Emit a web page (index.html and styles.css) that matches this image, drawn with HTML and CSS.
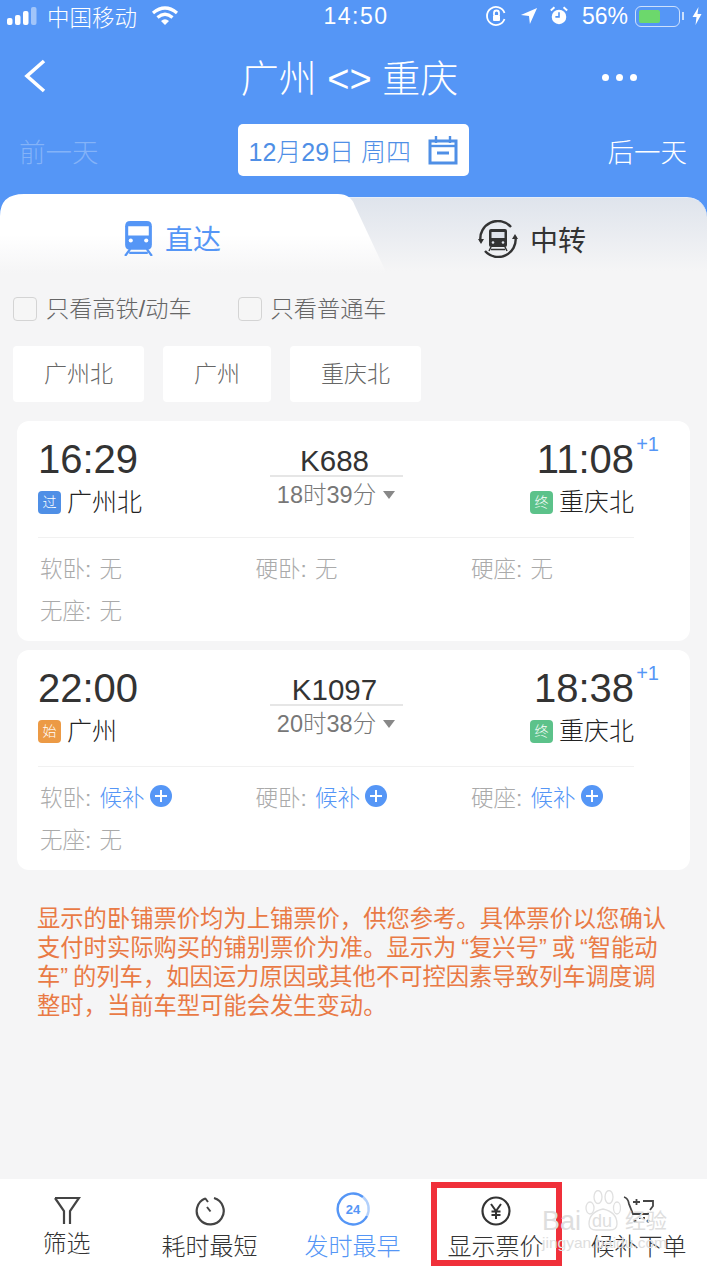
FILE: index.html
```html
<!DOCTYPE html>
<html lang="zh-CN">
<head>
  <meta charset="UTF-8">
  <meta name="viewport" content="width=device-width, initial-scale=1.0">
  <title>广州 &lt;&gt; 重庆</title>
  <link rel="stylesheet" href="styles.css">
</head>
<body>
  <div class="page">
    <div class="top">
      <div class="status">
        <div class="status-left">
          <svg class="signal" width="31" height="20" viewBox="0 0 31 20"><rect x="0" y="12" width="5.500" height="7" rx="2" fill="#fff"/><rect x="8" y="9" width="5.500" height="10" rx="2" fill="#fff"/><rect x="16" y="5" width="5.500" height="14" rx="2" fill="#fff"/><rect x="24" y="1" width="5.500" height="18" rx="2" fill="#fff" opacity=".45"/></svg>
          <span>中国移动</span>
          <svg class="wifi" width="28" height="22" viewBox="0 0 28 22" fill="none" stroke="#fff" stroke-width="3.200"><path d="M2 8 Q14 -2 26 8"/><path d="M6.500 12.500 Q14 6 21.500 12.500"/><path d="M14 20 L10 16 Q14 12.500 18 16 Z" fill="#fff" stroke="none"/></svg>
        </div>
        <div class="clock">14:50</div>
        <div class="status-right">
          <svg class="st-lock" width="23" height="22" viewBox="0 0 22 22" fill="none" stroke="#fff" stroke-width="1.800"><path d="M19 14 A9 9 0 1 1 19 8"/><rect x="7.500" y="10" width="7" height="6" rx="1" fill="#fff" stroke="none"/><path d="M8.500 10 V8 a2.500 2.500 0 0 1 5 0 V10"/></svg>
          <svg class="st-arrow" width="18" height="18" viewBox="0 0 20 20"><path d="M19 1 L1 9 L10 10 L11 19 Z" fill="#fff"/></svg>
          <svg class="st-alarm" width="20" height="20" viewBox="0 0 22 22"><circle cx="11" cy="12" r="8" fill="#fff"/><path d="M11 7 V12 H7" fill="none" stroke="#5596f6" stroke-width="1.800"/><path d="M2 5 L6 1.500 M20 5 L16 1.500" stroke="#fff" stroke-width="2.200"/></svg>
          <span class="percent">56%</span>
          <span class="battery"><span class="battery-fill"></span></span>
          <svg class="st-bolt" width="12" height="20" viewBox="0 0 11 20"><path d="M7 1 L1 11 H5 L4 19 L10 8 H6 Z" fill="#fff"/></svg>
        </div>
      </div>

      <div class="header">
        <svg class="back" width="24" height="34" viewBox="0 0 24 34" fill="none" stroke="#fff" stroke-width="3.600"><path d="M21 2 L4 17 L21 32"/></svg>
        <div class="title">广州 &lt;&gt; 重庆</div>
        <div class="dots"><i></i><i></i><i></i></div>
      </div>

      <div class="date-row">
        <span class="prev">前一天</span>
        <div class="date-box">
          <span>12月29日 周四</span>
          <svg width="30" height="30" viewBox="0 0 30 30" fill="none" stroke="#4f8fe6" stroke-width="3"><path d="M2 6 H28 V28 H2 Z"/><path d="M8 1 V8 M22 1 V8" stroke-width="2.400"/><path d="M2 11 H28" stroke-width="2.400"/><path d="M9 18 H21"/></svg>
        </div>
        <span class="next">后一天</span>
      </div>
    </div>

    <div class="tabs">
      <div class="tab tab-active">
        <svg width="29" height="35" viewBox="0 0 28 34"><path d="M6 0 H22 Q27 0 27 5 V23 Q27 28 22 28 H6 Q1 28 1 23 V5 Q1 0 6 0 Z" fill="#5596f6"/><path d="M4 5 H24 V14 H4 Z" fill="#fff"/><circle cx="6.500" cy="19" r="2" fill="#fff"/><circle cx="21.500" cy="19" r="2" fill="#fff"/><path d="M6 27 L1 34 M22 27 L27 34 M5 31 H23" stroke="#5596f6" stroke-width="2.200" fill="none"/></svg>
        <span>直达</span>
      </div>
      <div class="tab tab-other">
        <svg width="40" height="38" viewBox="0 0 40 38" fill="none"><path d="M2.500 21 A17.500 17.500 0 0 1 33 7 M37.500 17 A17.500 17.500 0 0 1 7 31" stroke="#333" stroke-width="2.400"/><path d="M0 19 H6 L3 24 Z M34 19 H40 L37 14 Z" fill="#333"/><path d="M13 9 H27 Q29 9 29 11 V25 Q29 27 27 27 H13 Q11 27 11 25 V11 Q11 9 13 9 Z" fill="#333"/><rect x="13.500" y="12" width="13" height="6" fill="#dfe3ea"/><circle cx="15" cy="22.500" r="1.300" fill="#dfe3ea"/><circle cx="25" cy="22.500" r="1.300" fill="#dfe3ea"/><path d="M13 27 L11 31 M27 27 L29 31 M13 29.500 H27" stroke="#333" stroke-width="1.500"/></svg>
        <span>中转</span>
      </div>
    </div>

    <div class="filters">
      <label class="check"><i class="box"></i>只看高铁/动车</label>
      <label class="check"><i class="box"></i>只看普通车</label>
    </div>

    <div class="chips">
      <span class="chip">广州北</span>
      <span class="chip chip-short">广州</span>
      <span class="chip">重庆北</span>
    </div>

    <div class="card">
      <div class="trip">
        <div class="end">
          <div class="time">16:29</div>
          <div class="station"><em class="tag tag-blue">过</em>广州北</div>
        </div>
        <div class="mid">
          <div class="train-no">K688</div>
          <div class="duration">18时39分<i class="caret"></i></div>
        </div>
        <div class="end end-right">
          <div class="time">11:08<sup class="plus">+1</sup></div>
          <div class="station"><em class="tag tag-green">终</em>重庆北</div>
        </div>
      </div>
      <div class="seats">
        <span>软卧: 无</span>
        <span>硬卧: 无</span>
        <span>硬座: 无</span>
        <span>无座: 无</span>
      </div>
    </div>

    <div class="card">
      <div class="trip">
        <div class="end">
          <div class="time">22:00</div>
          <div class="station"><em class="tag tag-orange">始</em>广州</div>
        </div>
        <div class="mid">
          <div class="train-no">K1097</div>
          <div class="duration">20时38分<i class="caret"></i></div>
        </div>
        <div class="end end-right">
          <div class="time">18:38<sup class="plus">+1</sup></div>
          <div class="station"><em class="tag tag-green">终</em>重庆北</div>
        </div>
      </div>
      <div class="seats">
        <span>软卧: <b>候补</b><i class="add"></i></span>
        <span>硬卧: <b>候补</b><i class="add"></i></span>
        <span>硬座: <b>候补</b><i class="add"></i></span>
        <span>无座: 无</span>
      </div>
    </div>

    <p class="notice">显示的卧铺票价均为上铺票价，供您参考。具体票价以您确认支付时实际购买的铺别票价为准。显示为 “复兴号” 或 “智能动车” 的列车，如因运力原因或其他不可控因素导致列车调度调整时，当前车型可能会发生变动。</p>

    <div class="tabbar">
      <div class="bar-item bar-first">
        <svg width="28" height="30" viewBox="0 0 28 30" fill="none" stroke="#444" stroke-width="2.200"><path d="M2 2 H26 L17 15 V28 M11 28 V15 L2 2"/></svg>
        <span>筛选</span>
      </div>
      <div class="bar-item">
        <svg width="32" height="30" viewBox="0 0 32 30" fill="none" stroke="#444" stroke-width="2.200"><path d="M11 2.500 A13.500 13.500 0 1 0 20 2"/><path d="M11 2 L14 6 M13 11 L16.500 15.500" stroke-width="2"/></svg>
        <span>耗时最短</span>
      </div>
      <div class="bar-item bar-on">
        <svg width="36" height="34" viewBox="0 0 36 34" fill="none" stroke="#5596f6" stroke-width="2.400"><path d="M28 5 A15.500 15.500 0 1 0 32 24"/><path d="M32 24 A15.500 15.500 0 0 0 28 5" opacity=".45"/><text x="18" y="22" text-anchor="middle" class="ring-text">24</text></svg>
        <span>发时最早</span>
      </div>
      <div class="bar-item bar-price">
        <svg width="32" height="30" viewBox="0 0 32 30" fill="none" stroke="#333" stroke-width="2.200"><circle cx="16" cy="15" r="13.500"/><path d="M11 8 L16 15 L21 8 M16 15 V23 M11.500 15.500 H20.500 M11.500 19 H20.500" stroke-width="2"/></svg>
        <span>显示票价</span>
        <i class="marker"></i>
      </div>
      <div class="bar-item">
        <svg width="32" height="30" viewBox="0 0 32 30" fill="none" stroke="#444" stroke-width="1.800"><path d="M1 1 Q5 2 6 8 L10 18 H26"/><path d="M10 6 H17 M13.500 3 V9 M20 5 H30 V10 L27 14"/><circle cx="12" cy="25" r="1.500" fill="#444" stroke="none"/><circle cx="25" cy="25" r="1.500" fill="#444" stroke="none"/><path d="M16 22 H22" stroke-dasharray="2 2"/></svg>
        <span>候补下单</span>
      </div>
    </div>

    <div class="watermark">
      <svg width="36" height="42" viewBox="0 0 36 42" fill="none" stroke="#e0e0e0" stroke-width="1.300"><ellipse cx="5" cy="18" rx="4" ry="6"/><ellipse cx="13" cy="7" rx="4" ry="6.500"/><ellipse cx="24" cy="7" rx="4" ry="6.500"/><ellipse cx="32" cy="18" rx="3.500" ry="6"/><path d="M4 34 Q4 22 18 19 Q32 22 32 34 Q32 40 25 40 H11 Q4 40 4 34 Z"/></svg>
      <div class="wm-logo"><span>Bai</span><span class="wm-du">du</span><span class="wm-cn">经验</span></div>
      <div class="wm-url">jingyan.baidu.com</div>
    </div>
  </div>
</body>
</html>
```

FILE: styles.css
```css
* {
  box-sizing: border-box;
}

html,
body {
  margin: 0;
  padding: 0;
}

body {
  font-family: "Liberation Sans", "Noto Sans CJK SC", sans-serif;
  background: #f5f5f6;
}

.page {
  position: relative;
  width: 707px;
  height: 1266px;
  overflow: hidden;
  display: flex;
  flex-direction: column;
  background: #f5f5f6;
}

.top {
  height: 194px;
  background: #5596f6;
  color: #fff;
}

/* status bar */
.status {
  height: 32px;
  padding: 0 4px 0 7px;
  display: grid;
  grid-template-columns: 1fr auto 1fr;
  align-items: center;
  font-size: 23px;
  font-weight: 300;
}

.status-left,
.status-right {
  display: flex;
  align-items: center;
}

.status-left span {
  margin: 0 14px 0 9px;
  font-size: 22.5px;
}

.status-right {
  justify-content: flex-end;
}

.st-arrow {
  margin-left: 12px;
}

.st-alarm {
  margin-left: 11px;
}

.percent {
  margin-left: 13px;
}

.clock {
  margin-left: 2px;
  letter-spacing: 1.5px;
}

.battery {
  position: relative;
  width: 45px;
  height: 21px;
  padding: 3px;
  margin-left: 7px;
  margin-right: 11px;
  border: 1.5px solid rgba(255, 255, 255, 0.7);
  border-radius: 6px;
}

/* battery nub */
.battery::after {
  content: "";
  position: absolute;
  right: -5px;
  top: 5px;
  width: 2px;
  height: 8px;
  background: rgba(255, 255, 255, 0.7);
}

.battery-fill {
  display: block;
  width: 56%;
  height: 100%;
  background: #6cd86c;
  border-radius: 2px;
}

/* header */
.header {
  height: 88px;
  padding: 0 70px 0 23px;
  display: flex;
  align-items: center;
  justify-content: space-between;
}

.title {
  font-size: 38px;
  line-height: 82px;
  font-weight: 300;
  margin-left: 50px;
  padding-top: 6px;
}

.dots {
  display: flex;
  gap: 7px;
  margin-top: 2px;
}

.dots i {
  width: 7px;
  height: 7px;
  border-radius: 50%;
  background: #fff;
}

.date-row {
  margin-top: 4px;
  height: 52px;
  padding: 0 20px 0 19px;
  display: flex;
  align-items: center;
  justify-content: space-between;
  font-size: 26.5px;
  font-weight: 300;
}

.prev {
  color: rgba(255, 255, 255, 0.28);
}

.date-box {
  width: 231px;
  height: 52px;
  padding: 0 11px;
  display: flex;
  align-items: center;
  justify-content: space-between;
  background: #fff;
  border-radius: 5px;
  color: #4f8fe6;
  font-size: 25px;
}

/* tabs */
.tabs {
  position: relative;
  height: 90px;
  display: flex;
  background: linear-gradient(#5596f6 30px, #f5f5f6 30px);
}

.tab {
  display: flex;
  align-items: center;
  justify-content: center;
  font-size: 28px;
  padding-bottom: 2px;
}

.tab-active {
  position: relative;
  z-index: 1;
  width: 385px;
  gap: 12px;
  padding-right: 40px;
  color: #5596f6;
  background: linear-gradient(#fff 45%, #f5f5f6 88%);
  clip-path: path("M0 90 L0 22 Q0 0 24 0 L338 0 Q351 0 355 12 L385 76 V90 Z");
}

.tab-other {
  flex: 1;
  margin-left: -40px;
  margin-top: 3px;
  padding-left: 12px;
  padding-bottom: 5px;
  gap: 12px;
  color: #333;
  background: linear-gradient(#dfe4ec, #f5f5f6 85%);
  border-top: 1.5px solid #e6edf8;
  border-top-right-radius: 20px;
}

/* filters */
.filters {
  margin-top: 13px;
  padding-left: 13px;
  display: flex;
  gap: 46px;
  font-size: 23.2px;
  font-weight: 300;
  color: #666;
}

.check {
  display: flex;
  align-items: center;
  gap: 9px;
  height: 24px;
  line-height: 24px;
}

.box {
  width: 24px;
  height: 24px;
  border: 1.5px solid #d4d4d4;
  border-radius: 4px;
  background: #f6f6f6;
}

.chips {
  margin-top: 25px;
  padding-left: 13px;
  display: flex;
  gap: 19px;
}

.chip {
  width: 131px;
  height: 56px;
  padding-bottom: 4px;
  display: flex;
  align-items: center;
  justify-content: center;
  background: #fff;
  border-radius: 4px;
  font-size: 23px;
  font-weight: 300;
  color: #666;
}

.chip-short {
  width: 108px;
}

/* train cards */
.card {
  width: 673px;
  height: 220px;
  margin: 19px 0 0 17px;
  padding: 14px 56px 0 21px;
  background: #fff;
  border-radius: 12px;
}

.card + .card {
  margin-top: 9px;
}

.trip {
  height: 103px;
  display: grid;
  grid-template-columns: 1fr 133px 1fr;
  border-bottom: 1px solid #f1f1f1;
}

.time {
  position: relative;
  font-size: 40px;
  line-height: 48px;
  color: #333;
}

.plus {
  position: absolute;
  right: -25px;
  top: -3px;
  font-size: 20px;
  line-height: 24px;
  font-weight: 300;
  color: #5596f6;
}

.station {
  margin-top: 1px;
  display: flex;
  align-items: center;
  gap: 6px;
  font-size: 25px;
  line-height: 36px;
  font-weight: 300;
  color: #222;
}

.tag {
  width: 23px;
  height: 23px;
  display: flex;
  align-items: center;
  justify-content: center;
  border-radius: 4px;
  font-size: 14px;
  font-style: normal;
  color: #fff;
}

.tag-blue {
  background: #4f8fe6;
}

.tag-green {
  background: #5cc28a;
}

.tag-orange {
  background: #ec9a45;
}

.end-right {
  display: flex;
  flex-direction: column;
  align-items: flex-end;
}

.mid {
  padding-top: 9px;
  text-align: center;
}

.train-no {
  height: 33px;
  padding-right: 3px;
  font-size: 29.5px;
  line-height: 33px;
  color: #333;
  border-bottom: 2px solid #e6e6e6;
}

.duration {
  margin-top: 1px;
  display: flex;
  align-items: center;
  justify-content: center;
  gap: 7px;
  font-size: 23.5px;
  line-height: 34px;
  font-weight: 300;
  color: #777;
}

.caret {
  width: 0;
  height: 0;
  border-left: 6.5px solid transparent;
  border-right: 6.5px solid transparent;
  border-top: 8px solid #888;
}

.seats {
  margin-top: 8px;
  margin-right: -60px;
  padding-left: 2px;
  display: grid;
  grid-template-columns: repeat(3, 215.500px);
  grid-auto-rows: 42px;
  align-items: center;
  font-size: 22.5px;
  font-weight: 300;
  word-spacing: 2px;
  color: #aaa;
}

.seats span {
  display: flex;
  align-items: center;
  white-space: pre;
}

.seats b {
  font-weight: 300;
  color: #5596f6;
}

.add {
  position: relative;
  width: 22px;
  height: 22px;
  margin-left: 5px;
  border-radius: 50%;
  background: #5596f6;
}

/* plus sign on the round button */
.add::before,
.add::after {
  content: "";
  position: absolute;
  left: 5px;
  top: 10px;
  width: 12px;
  height: 2px;
  background: #fff;
}

.add::after {
  transform: rotate(90deg);
}

.notice {
  margin: 35px 0 0;
  padding: 0 36px 0 37px;
  font-size: 23.3px;
  line-height: 29px;
  word-spacing: -1.5px;
  color: #e97a45;
}

/* bottom bar */
.tabbar {
  margin-top: auto;
  height: 87px;
  width: 712px;
  margin-left: -5px;
  display: grid;
  grid-template-columns: repeat(5, 143px);
  background: #fff;
}

.bar-item {
  position: relative;
  padding-top: 17px;
  display: flex;
  flex-direction: column;
  align-items: center;
  font-size: 24px;
  line-height: 36px;
  font-weight: 300;
  color: #333;
}

.bar-item span {
  margin-top: 3px;
}

.bar-first span {
  margin-top: 0;
}

.bar-on {
  padding-top: 13px;
  color: #5596f6;
}

.ring-text {
  font-family: "Liberation Sans", sans-serif;
  font-size: 13px;
  font-weight: 700;
  fill: #5596f6;
  stroke: none;
}

.marker {
  position: absolute;
  left: 7px;
  top: 3px;
  width: 131px;
  height: 84px;
  border: 6px solid #f0303a;
}

.watermark {
  position: absolute;
  left: 542px;
  top: 1190px;
  width: 130px;
  color: #dedede;
  white-space: nowrap;
  pointer-events: none;
}

.watermark svg {
  position: absolute;
  left: 43px;
  top: 0;
}

.wm-logo {
  margin-top: 18px;
  display: flex;
  align-items: center;
  font-size: 27px;
  line-height: 26px;
}

.wm-du {
  margin: 0 13px 0 11px;
  font-size: 18px;
}

.wm-cn {
  font-size: 21px;
}

.wm-url {
  margin-top: 1px;
  font-size: 15.5px;
  line-height: 16px;
}
```
